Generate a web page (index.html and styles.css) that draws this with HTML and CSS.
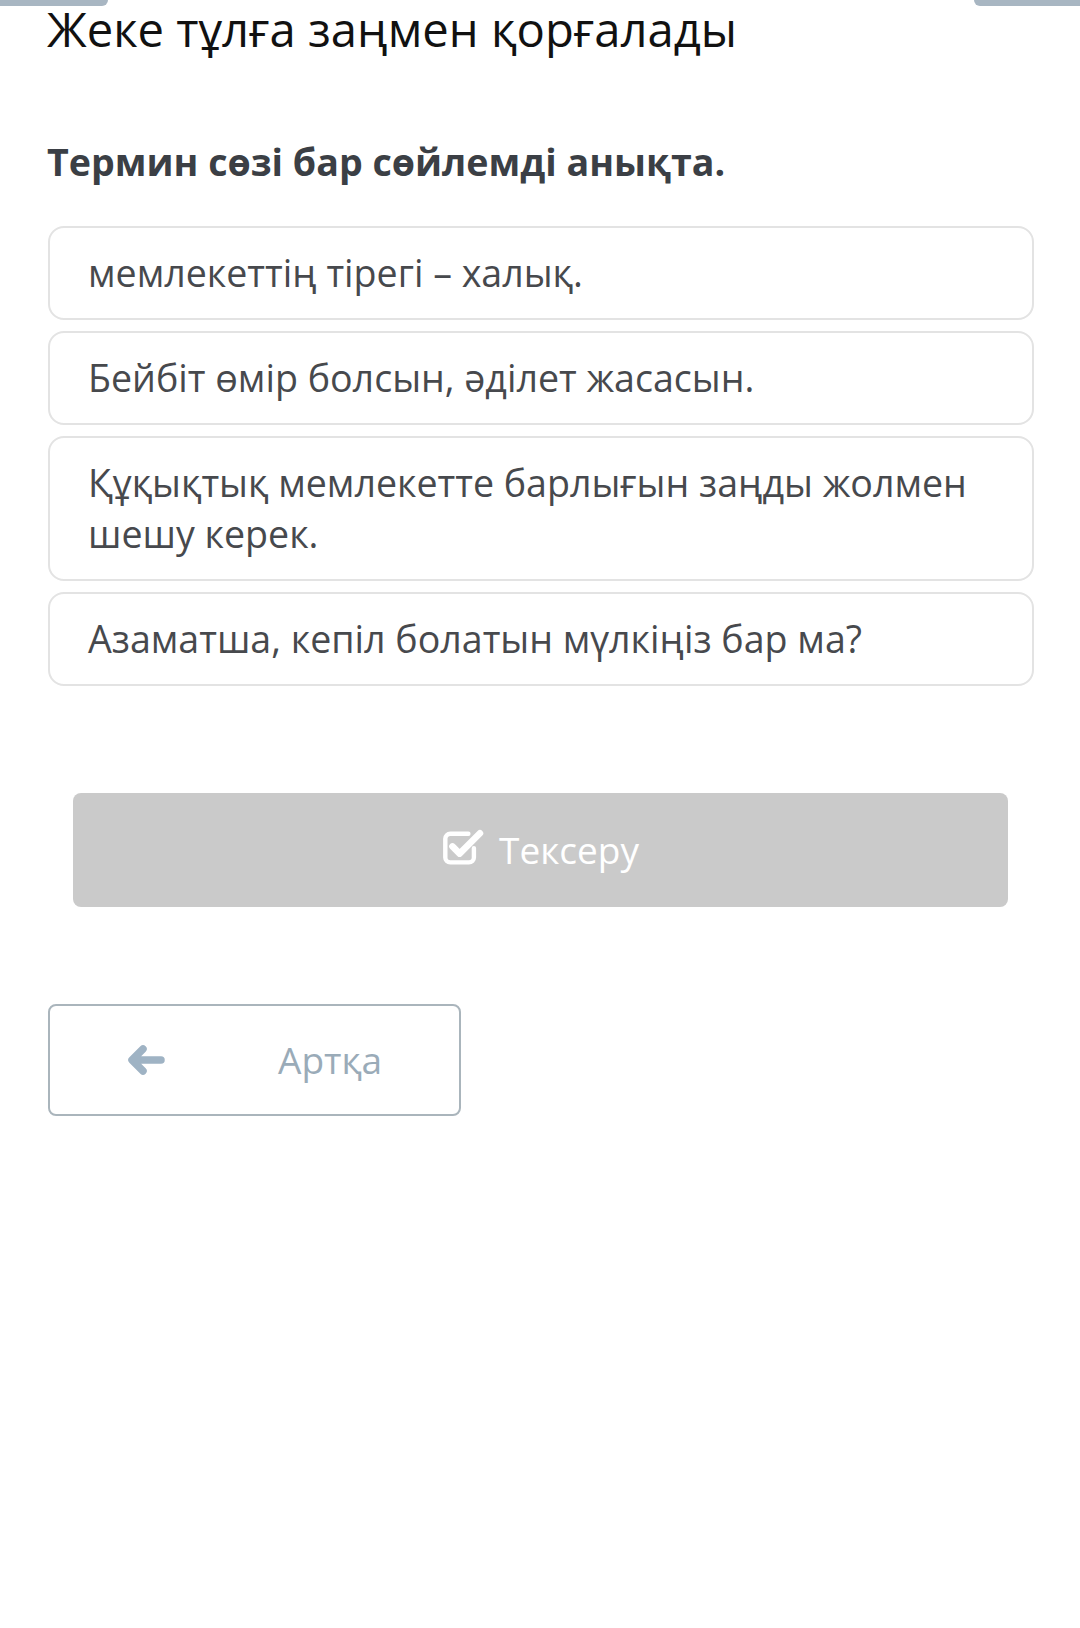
FILE: index.html
```html
<!DOCTYPE html>
<html lang="kk">
<head>
<meta charset="utf-8">
<title>Жеке тұлға заңмен қорғалады</title>
<link rel="stylesheet" href="styles.css">
</head>
<body>
<div class="tabs">
  <span class="tab tab-left"></span>
  <span class="tab tab-right"></span>
</div>
<main class="page">
  <h1 class="title">Жеке тұлға заңмен қорғалады</h1>
  <h2 class="question">Термин сөзі бар сөйлемді анықта.</h2>
  <ul class="options">
    <li class="option">мемлекеттің тірегі – халық.</li>
    <li class="option">Бейбіт өмір болсын, әділет жасасын.</li>
    <li class="option">Құқықтық мемлекетте барлығын заңды жолмен шешу керек.</li>
    <li class="option">Азаматша, кепіл болатын мүлкіңіз бар ма?</li>
  </ul>
  <div class="check-wrap">
    <button class="check-btn" type="button">
      <svg class="check-icon" viewBox="0 0 40 36" width="44" height="40" aria-hidden="true">
        <path d="M29 19v8.5a4.5 4.5 0 0 1-4.5 4.5H7.5A4.5 4.5 0 0 1 3 27.5V10.5A4.5 4.5 0 0 1 7.5 6H24" fill="none" stroke="#fff" stroke-width="4" stroke-linecap="round"/>
        <path d="M9.5 17.5l6.5 6.5L34.5 5.5" fill="none" stroke="#fff" stroke-width="6" stroke-linecap="round" stroke-linejoin="round"/>
      </svg>
      <span>Тексеру</span>
    </button>
  </div>
  <button class="back-btn" type="button">
    <svg class="back-icon" viewBox="0 0 38 32" width="38" height="32" aria-hidden="true">
      <path d="M34 16H6M16 5L5 16l11 11" fill="none" stroke="#9fb3c4" stroke-width="7.5" stroke-linecap="round" stroke-linejoin="round"/>
    </svg>
    <span class="back-text">Артқа</span>
  </button>
</main>
</body>
</html>
```

FILE: styles.css
```css
html, body {
  margin: 0;
  padding: 0;
  background: #ffffff;
}

body {
  font-family: "Open Sans", "Noto Sans", "Liberation Sans", sans-serif;
  width: 1080px;
  min-height: 1628px;
}

.tabs {
  display: flex;
  justify-content: space-between;
  height: 6px;
}

.tab {
  display: block;
  width: 108px;
  height: 6px;
  background: #a8b6c2;
}

.tab-left {
  border-bottom-right-radius: 6px;
}

.tab-right {
  width: 106px;
  border-bottom-left-radius: 6px;
}

.page {
  padding: 0 46px 0 48px;
}

.title {
  margin: 0 0 0 -1px;
  font-size: 47.2px;
  line-height: 46px;
  font-weight: 400;
  color: #111111;
}

.question {
  margin: 87px 0 0 -1px;
  font-size: 37.6px;
  line-height: 46px;
  font-weight: 700;
  color: #3b3f45;
}

.options {
  list-style: none;
  margin: 41px 0 0 0;
  padding: 0;
  display: flex;
  flex-direction: column;
  gap: 11px;
}

.option {
  border: 2px solid #e3e3e3;
  border-radius: 16px;
  padding: 19px 60px 20px 38px;
  font-size: 37.6px;
  line-height: 51px;
  color: #47494d;
}

.check-wrap {
  padding: 0 26px 0 25px;
  margin-top: 107px;
}

.check-btn {
  display: flex;
  align-items: center;
  justify-content: center;
  gap: 13px;
  width: 100%;
  height: 114px;
  border: none;
  border-radius: 8px;
  background: #cacaca;
  color: #ffffff;
  font-family: inherit;
  font-size: 37px;
  padding: 0 0 2px 0;
}

.check-icon {
  display: block;
  margin-top: -4px;
}

.back-btn {
  display: flex;
  align-items: center;
  margin-top: 97px;
  width: 413px;
  height: 112px;
  border: 2px solid #aab5bc;
  border-radius: 8px;
  background: #ffffff;
  padding: 0 0 2px 77px;
  font-family: inherit;
  font-size: 37px;
  color: #9aabb8;
}

.back-icon {
  display: block;
  margin-top: 2px;
}

.back-text {
  margin-left: 113px;
}
```
